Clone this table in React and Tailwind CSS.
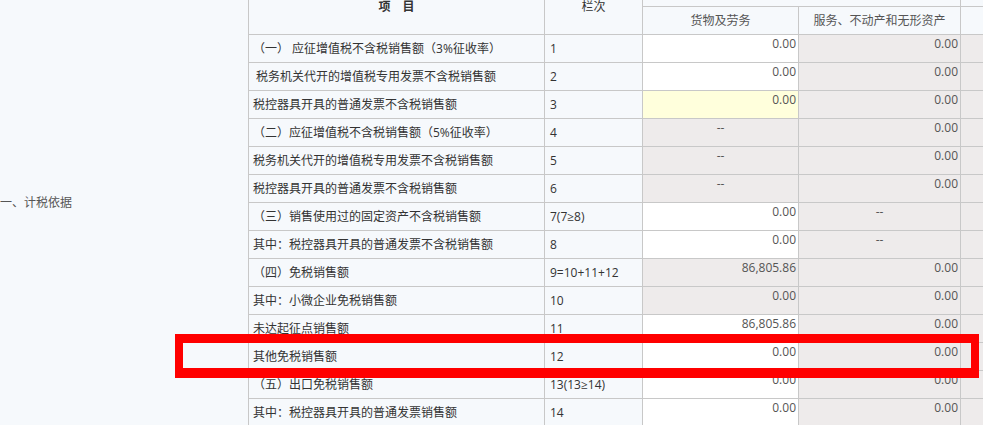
import React from "react";

const rows = [
  { label: "（一） 应征增值税不含税销售额（3%征收率）", no: "1", a: { v: "0.00", bg: "w" }, b: { v: "0.00", bg: "g" } },
  { label: " 税务机关代开的增值税专用发票不含税销售额", no: "2", a: { v: "0.00", bg: "w" }, b: { v: "0.00", bg: "g" } },
  { label: "税控器具开具的普通发票不含税销售额", no: "3", a: { v: "0.00", bg: "y" }, b: { v: "0.00", bg: "g" } },
  { label: "（二）应征增值税不含税销售额（5%征收率）", no: "4", a: { v: "--", bg: "g" }, b: { v: "0.00", bg: "g" } },
  { label: "税务机关代开的增值税专用发票不含税销售额", no: "5", a: { v: "--", bg: "g" }, b: { v: "0.00", bg: "g" } },
  { label: "税控器具开具的普通发票不含税销售额", no: "6", a: { v: "--", bg: "g" }, b: { v: "0.00", bg: "g" } },
  { label: "（三）销售使用过的固定资产不含税销售额", no: "7(7≥8)", a: { v: "0.00", bg: "w" }, b: { v: "--", bg: "g" } },
  { label: "其中：税控器具开具的普通发票不含税销售额", no: "8", a: { v: "0.00", bg: "w" }, b: { v: "--", bg: "g" } },
  { label: "（四）免税销售额", no: "9=10+11+12", a: { v: "86,805.86", bg: "g" }, b: { v: "0.00", bg: "g" } },
  { label: "其中：小微企业免税销售额", no: "10", a: { v: "0.00", bg: "g" }, b: { v: "0.00", bg: "g" } },
  { label: "未达起征点销售额", no: "11", a: { v: "86,805.86", bg: "w" }, b: { v: "0.00", bg: "g" } },
  { label: "其他免税销售额", no: "12", a: { v: "0.00", bg: "w" }, b: { v: "0.00", bg: "g" } },
  { label: "（五）出口免税销售额", no: "13(13≥14)", a: { v: "0.00", bg: "w" }, b: { v: "0.00", bg: "g" } },
  { label: "其中：税控器具开具的普通发票销售额", no: "14", a: { v: "0.00", bg: "w" }, b: { v: "0.00", bg: "g" } },
];

function ValueCell({ cell }) {
  const bg =
    cell.bg === "w" ? "bg-white" : cell.bg === "y" ? "bg-[#ffffdc]" : "bg-[#eeebeb]";
  const dash = cell.v === "--";
  return (
    <div
      className={`${bg} pt-px pr-[2px] leading-[16px] text-[#555] ${
        dash ? "text-center pl-[2px]" : "text-right"
      }`}
    >
      {cell.v}
    </div>
  );
}

export default function App() {
  return (
    <div className="w-[983px] h-[425px] overflow-hidden relative bg-[#f6f9fc] font-['Open_Sans','Noto_Sans_CJK_SC',sans-serif] text-[12px] [text-spacing-trim:space-all]">
      <div className="flex">
        <div className="w-[248px] shrink-0 pt-[195px] leading-[16px] text-[#555] whitespace-nowrap">
          一、计税依据
        </div>
        <div className="flex-1 -mt-[22px] bg-[#c8c8c8] pl-px pt-px grid grid-cols-[295px_97px_155px_161px_1fr] auto-rows-[27px] gap-px">
          <div className="row-span-2 bg-[#f6f9fc] flex items-center justify-center font-bold text-[#333]">
            项　目
          </div>
          <div className="row-span-2 bg-[#f6f9fc] flex items-center justify-center text-[#333]">
            栏次
          </div>
          <div className="col-span-2 bg-[#f6f9fc]"></div>
          <div className="bg-[#f6f9fc]"></div>
          <div className="bg-[#f6f9fc] flex items-center justify-center text-[#555]">
            货物及劳务
          </div>
          <div className="bg-[#f6f9fc] flex items-center justify-center text-[#555]">
            服务、不动产和无形资产
          </div>
          <div className="bg-[#f6f9fc]"></div>
          {rows.map((r) => (
            <React.Fragment key={r.no}>
              <div className="bg-[#f6f9fc] flex items-center pl-[4px] whitespace-pre text-[#333] overflow-hidden">
                {r.label}
              </div>
              <div className="bg-[#f6f9fc] flex items-center pl-[5px] text-[#333] whitespace-nowrap">
                {r.no}
              </div>
              <ValueCell cell={r.a} />
              <ValueCell cell={r.b} />
              <div className="bg-[#eeebeb]"></div>
            </React.Fragment>
          ))}
        </div>
      </div>
      <div className="absolute left-[175px] top-[334px] w-[804px] h-[44px] border-[#ff0000] border-l-[8px] border-r-[8px] border-t-[9px] border-b-[10px] z-10"></div>
    </div>
  );
}
